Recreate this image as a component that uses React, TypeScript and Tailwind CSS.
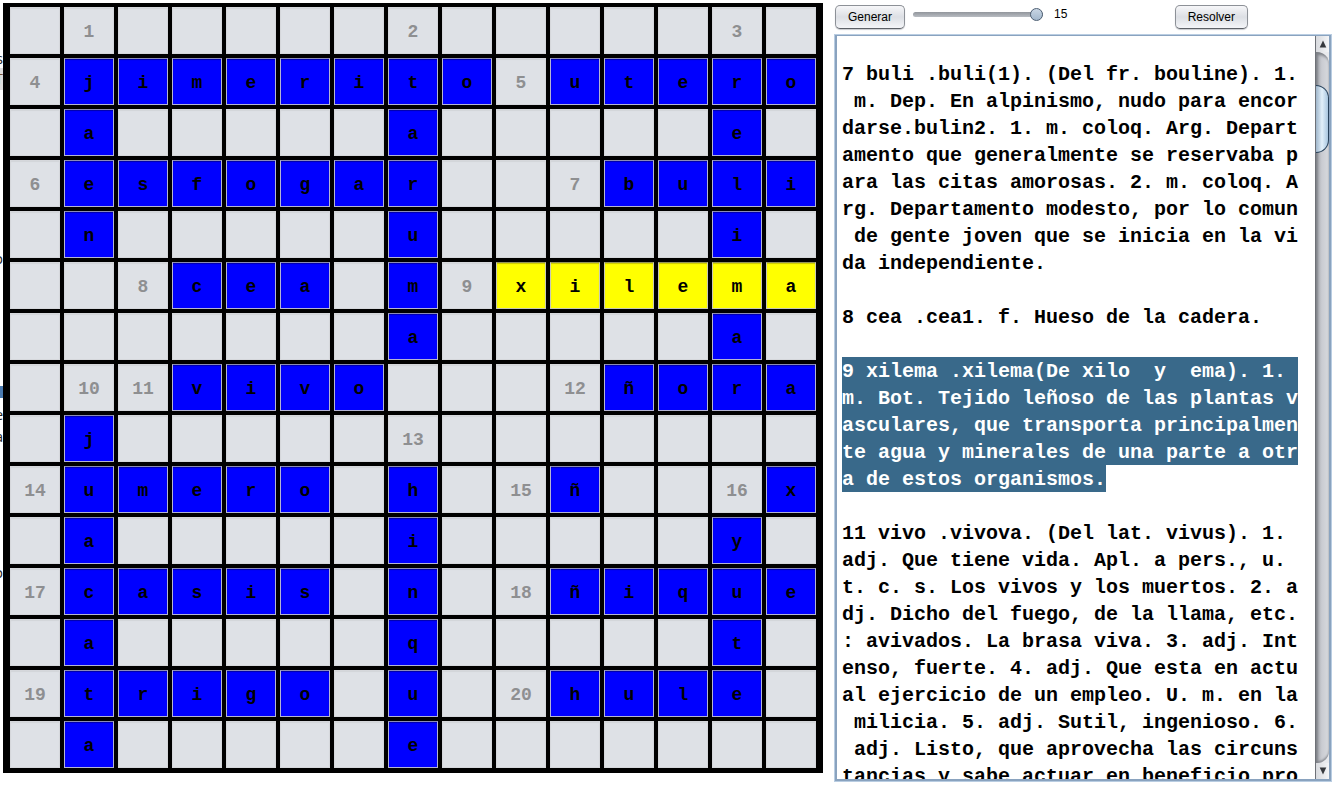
import { useRef, useState } from "react";

const ROWS = [
  ". 1 . . . . . 2 . . . . . 3 .",
  "4 j i m e r i t o 5 u t e r o",
  ". a . . . . . a . . . . . e .",
  "6 e s f o g a r . . 7 b u l i",
  ". n . . . . . u . . . . . i .",
  ". . 8 c e a . m 9 x i l e m a",
  ". . . . . . . a . . . . . a .",
  ". 10 11 v i v o . . . 12 ñ o r a",
  ". j . . . . . 13 . . . . . . .",
  "14 u m e r o . h . 15 ñ . . 16 x",
  ". a . . . . . i . . . . . y .",
  "17 c a s i s . n . 18 ñ i q u e",
  ". a . . . . . q . . . . . t .",
  "19 t r i g o . u . 20 h u l e .",
  ". a . . . . . e . . . . . . .",
].map((row) => row.split(" "));

const SELECTED_ROW = 5;
const SELECTED_FROM = 9;

const CLUES: { selected?: boolean; lines: string[] }[] = [
  {
    lines: [
      "7 buli .buli(1). (Del fr. bouline). 1.",
      " m. Dep. En alpinismo, nudo para encor",
      "darse.bulin2. 1. m. coloq. Arg. Depart",
      "amento que generalmente se reservaba p",
      "ara las citas amorosas. 2. m. coloq. A",
      "rg. Departamento modesto, por lo comun",
      " de gente joven que se inicia en la vi",
      "da independiente.",
    ],
  },
  { lines: ["8 cea .cea1. f. Hueso de la cadera."] },
  {
    selected: true,
    lines: [
      "9 xilema .xilema(De xilo  y  ema). 1. ",
      "m. Bot. Tejido leñoso de las plantas v",
      "asculares, que transporta principalmen",
      "te agua y minerales de una parte a otr",
      "a de estos organismos.",
    ],
  },
  {
    lines: [
      "11 vivo .vivova. (Del lat. vivus). 1. ",
      "adj. Que tiene vida. Apl. a pers., u. ",
      "t. c. s. Los vivos y los muertos. 2. a",
      "dj. Dicho del fuego, de la llama, etc.",
      ": avivados. La brasa viva. 3. adj. Int",
      "enso, fuerte. 4. adj. Que esta en actu",
      "al ejercicio de un empleo. U. m. en la",
      " milicia. 5. adj. Sutil, ingenioso. 6.",
      " adj. Listo, que aprovecha las circuns",
      "tancias y sabe actuar en beneficio pro",
    ],
  },
];

const CELL =
  "h-[47px] w-full min-w-0 rounded-none border px-0 pt-0.5 pb-0 text-center text-lg font-bold outline-none";
const EMPTY =
  "border-[#d5d7db] bg-[#dee1e6] text-[#8e8f91] shadow-[inset_0_1px_1px_#d2d5d9]";
const FILLED =
  "border-[#b4b4d4] border-t-[#8c8cb4] bg-[#0000ff] text-black shadow-[inset_0_1px_1px_#0000a8]";
const SELECTED =
  "border-[#c8c8b4] border-t-[#96965a] bg-[#ffff00] text-black shadow-[inset_0_1px_1px_#c8c800]";

function Cell({ value, row, col }: { value: string; row: number; col: number }) {
  const blank = value === ".";
  const isNumber = /^\d+$/.test(value);
  const selected = row === SELECTED_ROW && col >= SELECTED_FROM;
  const tone = blank || isNumber ? EMPTY : selected ? SELECTED : FILLED;
  return (
    <input
      type="text"
      readOnly
      aria-label={`Fila ${row + 1}, columna ${col + 1}`}
      value={blank ? "" : value}
      className={`${CELL} ${tone}`}
    />
  );
}

function Board() {
  return (
    <div className="grid min-w-0 flex-1 grid-cols-[repeat(15,minmax(0,1fr))] gap-1 bg-black px-[7px] pt-1 pb-[5px] font-['Liberation_Mono',monospace]">
      {ROWS.map((row, r) =>
        row.map((value, c) => <Cell key={`${r}-${c}`} value={value} row={r} col={c} />),
      )}
    </div>
  );
}

function Button({ children }: { children: string }) {
  return (
    <button
      type="button"
      className="h-6 rounded-[5px] border border-[#8d9197] border-b-[#5c6066] bg-linear-to-b from-[#f7f7f9] via-[#dcdfe4] to-[#f4f5f8] px-3 pt-px text-xs leading-[21px] shadow-[0_1px_1px_#c8cacf]"
    >
      {children}
    </button>
  );
}

function Toolbar() {
  const [size, setSize] = useState(15);
  return (
    <div className="flex h-[34px] shrink-0 items-start pt-[5px] pl-px font-['Liberation_Sans',sans-serif] text-xs text-black">
      <Button>Generar</Button>
      <input
        type="range"
        id="size"
        aria-label="Tamaño"
        min={5}
        max={15}
        value={size}
        onChange={(e) => setSize(Number(e.target.value))}
        className="ml-2 h-[18px] w-[130px] appearance-none bg-transparent [&::-webkit-slider-runnable-track]:h-[5px] [&::-webkit-slider-runnable-track]:rounded-full [&::-webkit-slider-runnable-track]:bg-linear-to-b [&::-webkit-slider-runnable-track]:from-[#92969c] [&::-webkit-slider-runnable-track]:to-[#b8bcc2] [&::-webkit-slider-thumb]:-mt-1 [&::-webkit-slider-thumb]:size-[13px] [&::-webkit-slider-thumb]:appearance-none [&::-webkit-slider-thumb]:rounded-full [&::-webkit-slider-thumb]:border [&::-webkit-slider-thumb]:border-[#4d5f73] [&::-webkit-slider-thumb]:bg-linear-to-b [&::-webkit-slider-thumb]:from-[#c9d6e4] [&::-webkit-slider-thumb]:to-[#a3b8cd]"
      />
      <output htmlFor="size" className="ml-[11px] flex-1 leading-[18px]">
        {size}
      </output>
      <div className="mr-[84px]">
        <Button>Resolver</Button>
      </div>
    </div>
  );
}

function ScrollBar({ onScroll }: { onScroll: (delta: number) => void }) {
  return (
    <div className="flex w-[14px] shrink-0 flex-col border-l border-[#6e7177] bg-[#e9eaed]">
      <button
        type="button"
        aria-label="Subir"
        onClick={() => onScroll(-27)}
        className="flex h-4 w-full items-center justify-center bg-linear-to-r from-[#d8dade] to-[#f4f5f7]"
      >
        <svg viewBox="0 0 8 8" className="size-2">
          <path d="M4 0.5 7.3 7.5H0.7Z" fill="#35383d" />
        </svg>
      </button>
      <div className="flex min-h-0 flex-1 flex-col rounded-r-[12px] bg-linear-to-r from-[#b3b5bb] via-[#cbcdd3] to-[#d8dade] pt-[33px] shadow-[inset_2px_3px_3px_#7c7f85,inset_0_-2px_2px_#8f9298]">
        <div className="h-[68px] rounded-r-[14px] border border-l-0 border-[#29435c] bg-linear-to-r from-[#9fb6cb] via-[#e2f0fa] to-[#a9c6df]" />
      </div>
      <button
        type="button"
        aria-label="Bajar"
        onClick={() => onScroll(27)}
        className="flex h-4 w-full items-center justify-center bg-linear-to-r from-[#d8dade] to-[#f4f5f7]"
      >
        <svg viewBox="0 0 8 8" className="size-2">
          <path d="M4 7.5 0.7 0.5H7.3Z" fill="#35383d" />
        </svg>
      </button>
    </div>
  );
}

function Clues() {
  const view = useRef<HTMLDivElement>(null);
  return (
    <div className="flex min-h-0 flex-1 border border-[#b9cde2]">
      <div className="flex min-h-0 min-w-0 flex-1 border-2 border-t border-[#8aa3bf] bg-white">
        <div
          ref={view}
          tabIndex={0}
          role="region"
          aria-label="Definiciones"
          className="flex min-w-0 flex-1 flex-col gap-[27px] overflow-hidden pt-6 pl-[5px] font-['Liberation_Mono',monospace] text-xl leading-6 font-bold text-black outline-none"
        >
          {CLUES.map((clue) => (
            <div key={clue.lines[0]} className="flex flex-col items-start">
              {clue.lines.map((line) =>
                clue.selected ? (
                  <mark key={line} className="bg-[#39698a] pt-[3px] whitespace-pre text-white">
                    {line}
                  </mark>
                ) : (
                  <span key={line} className="pt-[3px] whitespace-pre">
                    {line}
                  </span>
                ),
              )}
            </div>
          ))}
        </div>
        <ScrollBar onScroll={(delta) => view.current?.scrollBy({ top: delta })} />
      </div>
    </div>
  );
}

/* Right edge of the document lying behind the window. */
function BackgroundEdge() {
  return (
    <div
      aria-hidden="true"
      className="flex w-[3px] shrink-0 flex-col items-end overflow-hidden pt-[50px] font-['Open_Sans',sans-serif] text-sm leading-[18px] text-[#222222]"
    >
      <span>s</span>
      <span className="mb-[160px] h-[22px] bg-[#dcdcdc] leading-[22px] text-[#7a5230]">T</span>
      <span className="mb-[118px]">o</span>
      <span className="mb-2 h-3 w-[3px] bg-[#4a7ab0]" />
      <span className="mb-1">e</span>
      <span className="mb-[118px]">ra</span>
      <span>o</span>
    </div>
  );
}

export default function App() {
  return (
    <main className="flex h-screen items-start overflow-hidden bg-white">
      <BackgroundEdge />
      <div className="flex min-w-0 flex-1 pt-[3px]">
        <Board />
      </div>
      <section className="mr-[7px] ml-[11px] flex h-full w-[498px] shrink-0 flex-col pb-[5px]">
        <Toolbar />
        <Clues />
      </section>
    </main>
  );
}
